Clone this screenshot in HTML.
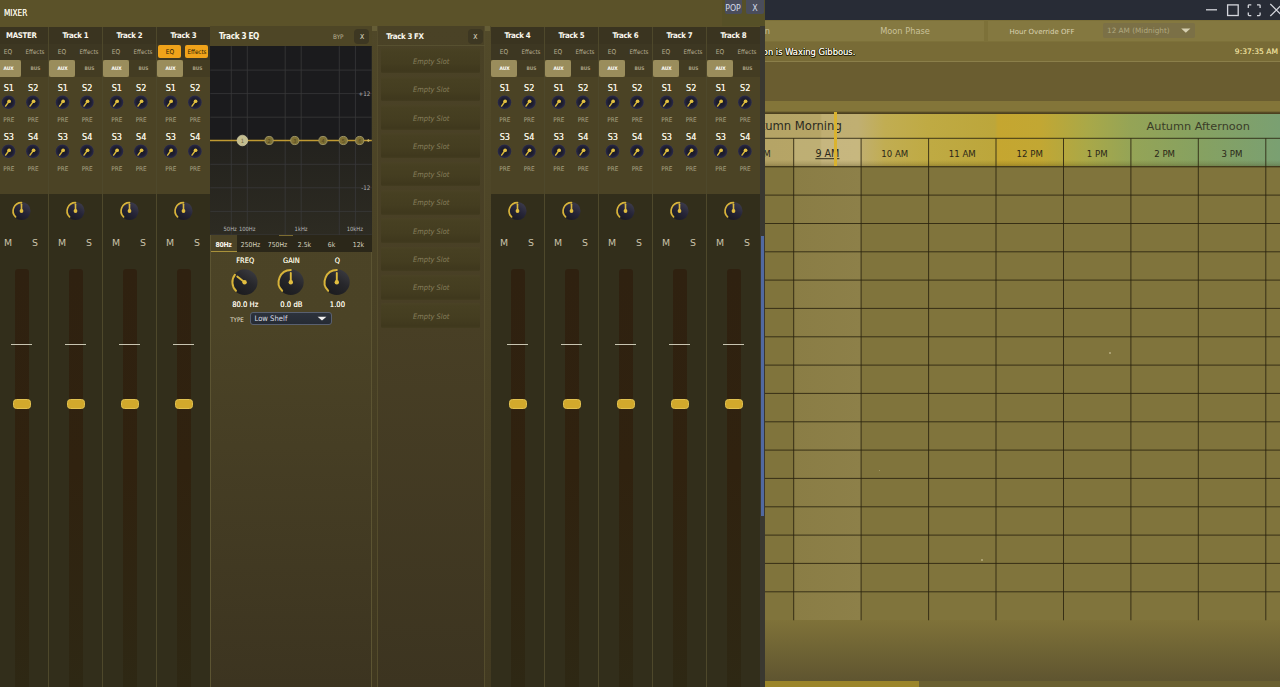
<!DOCTYPE html><html><head><meta charset="utf-8"><title>Mixer</title><style>
*{box-sizing:border-box;margin:0;padding:0}
html,body{width:1280px;height:687px;overflow:hidden;background:#7e723a}
body{position:relative;font-family:"DejaVu Sans Condensed","Liberation Sans",sans-serif;color:#fff}
.a{position:absolute}
.t{position:absolute;white-space:nowrap;text-align:center;transform:translate(-50%,-50%);line-height:1}
.tl{position:absolute;white-space:nowrap;transform:translate(0,-50%);line-height:1}
.tr{position:absolute;white-space:nowrap;transform:translate(-100%,-50%);line-height:1}
.main{font-family:"DejaVu Sans","Liberation Sans",sans-serif}
#mixer{position:absolute;left:0;top:0;width:765px;height:687px;background:#5b5229;overflow:hidden}
.col{position:absolute;top:26px;width:54px;height:661px;}
.col .sep{position:absolute;left:-1.2px;top:0.5px;width:1.6px;height:661px;background:#4e482b}
.col .nm{position:absolute;left:0.2px;top:0.5px;width:52.8px;height:17.5px;background:#3a3420}
.col .eqr{position:absolute;left:0.2px;top:18px;width:52.8px;height:16px;background:#3d3722}
.col .snd{position:absolute;left:0.2px;top:51px;width:52.8px;height:116.8px;background:#4b4325}
.col .low{position:absolute;left:0.2px;top:167.8px;width:52.8px;height:493.2px;background:#322e1b}
.aux{position:absolute;left:-0.4px;top:34px;width:26.6px;height:17px;background:#9a8d5c;border-radius:2px}
.bus{position:absolute;left:26.2px;top:34px;width:26.8px;height:17px;background:#433c22}
.lab{color:#f3efe0;font-size:9px;text-shadow:0 0 0.3px #f3efe0}
.pre{color:#a8a082;font-size:6.4px}
.ms{color:#c9c2aa;font-size:9.4px;font-family:"DejaVu Sans","Liberation Sans",sans-serif}
.ftrack{position:absolute;left:19.6px;top:243px;width:14px;height:418px;background:linear-gradient(180deg,#2f2110 0,#30220f 200px,#2e2814 418px);border-radius:3px 3px 0 0}
.fzero{position:absolute;left:16px;top:318px;width:21px;height:1px;background:#c8c4b0}
.fhandle{position:absolute;left:17.5px;top:372.8px;width:18px;height:10.6px;background:#d2a92c;border:1px solid #e0c050;border-radius:3.5px}
</style></head><body>
<div class="a main" id="mainwin" style="left:0;top:0;width:1280px;height:687px">
<div class="a" style="left:0;top:0;width:1280px;height:20px;background:#282c36"></div>
<svg class="a" style="left:1196px;top:0" width="84" height="20" viewBox="1196 0 84 20" fill="none" stroke="#d4d6dc" stroke-width="1.3"><path d="M1206 9.8H1217"/><rect x="1227.6" y="4.9" width="10.6" height="10.6"/><path d="M1248.3 8V5.6Q1248.3 4.8 1249.1 4.8H1251.3 M1257 4.8H1259.3Q1260.1 4.8 1260.1 5.6V8 M1260.1 12.4V14.8Q1260.1 15.6 1259.3 15.6H1257 M1251.3 15.6H1249.1Q1248.3 15.6 1248.3 14.8V12.4"/><path d="M1270.3 4L1282.3 16M1282.3 4L1270.3 16"/></svg>
<div class="a" style="left:0;top:20px;width:1280px;height:22px;background:#7d7139"></div>
<div class="a" style="left:760px;top:21px;width:224px;height:20px;background:#857941"></div>
<div class="a" style="left:988px;top:21px;width:292px;height:20px;background:#847840"></div>
<div class="tr" style="left:770px;top:31.3px;font-size:8.25px;color:#c9c19a">Season</div>
<div class="t" style="left:905px;top:31.3px;font-size:8.25px;color:#c9c19a">Moon Phase</div>
<div class="t" style="left:1042px;top:31.5px;font-size:7px;color:#dad3b2">Hour Override OFF</div>
<div class="a" style="left:1103px;top:23px;width:91.5px;height:15px;background:#7b7046;border-radius:2px"></div>
<div class="tl" style="left:1107px;top:31.2px;font-size:7.3px;color:#b0a880">12 AM (Midnight)</div>
<svg class="a" style="left:1180px;top:27px" width="12" height="7"><path d="M1.2 1.4H10.4L5.8 5.8Z" fill="#d6cfb0"/></svg>
<div class="a" style="left:0;top:42px;width:1280px;height:20px;background:#786b36"></div>
<div class="a" style="left:0;top:61px;width:1280px;height:1px;background:#8b7f4a"></div>
<div class="tr" style="left:855.4px;top:51.8px;font-family:DejaVu Sans Condensed,Liberation Sans,sans-serif;font-size:9.3px;color:#f4f1e6;text-shadow:0 0 0.4px #f4f1e6,0.8px 0 0.3px #2a2408,-0.8px 0 0.3px #2a2408,0 0.8px 0.3px #2a2408,0 -0.8px 0.3px #2a2408,0.6px 0.6px 0.3px #2a2408,-0.6px 0.6px 0.3px #2a2408,0.6px -0.6px 0.3px #2a2408,-0.6px -0.6px 0.3px #2a2408">The moon is Waxing Gibbous.</div>
<div class="tr" style="left:1278px;top:51.6px;font-size:7.55px;color:#e3d793;text-shadow:0 0 0.6px #e3d793">9:37:35 AM</div>
<div class="a" style="left:0;top:62px;width:1280px;height:40px;background:#6a5d30"></div>
<div class="a" style="left:0;top:101px;width:1280px;height:11.5px;background:#837539"></div>
<div class="a" style="left:0;top:111.4px;width:1280px;height:3.2px;background:linear-gradient(180deg,rgba(70,58,28,0),rgba(70,58,28,0.85) 45%,#4a3e1e 80%,rgba(74,62,30,0.5))"></div>
<div class="a" style="left:0;top:114px;width:1280px;height:52px;background:linear-gradient(90deg,#b5a466 766px,#b6a566 820px,#bfae72 822px,#c0af72 858px,#c1ad52 885px,#bfaa43 930px,#bca63b 995px,#c5a630 998px,#c2a733 1040px,#a8a849 1090px,#95a456 1130px,#86a161 1200px,#7aa072 1280px)"></div>
<div class="a" style="left:0;top:114px;width:1280px;height:24px;background:rgba(255,255,255,0.0)"></div>
<div class="a" style="left:794px;top:138px;width:67px;height:28px;background:rgba(255,250,225,0.12)"></div>

<div class="a" style="left:0;top:166px;width:1280px;height:454px;background:#80743c"></div>
<div class="a" style="left:794px;top:166px;width:67px;height:454px;background:linear-gradient(90deg,#8a7d45,#8d8049)"></div>
<div class="a" style="left:0;top:160px;width:1280px;height:7px;background:linear-gradient(180deg,rgba(60,50,10,0),rgba(60,50,10,0.12) 50%,rgba(60,50,10,0.32))"></div>
<div class="a" style="left:0;top:620px;width:1280px;height:67px;background:linear-gradient(180deg,#7f7239,#5f5530 90%)"></div>
<div class="a" style="left:0;top:681px;width:1280px;height:6px;background:#6a6031"></div>
<div class="a" style="left:760px;top:681px;width:158.5px;height:6px;background:#9b8529"></div>
<svg class="a" style="left:760px;top:112px" width="520" height="510" viewBox="760 112 520 510" stroke="#2a230f" stroke-width="0.95" stroke-opacity="0.9" fill="none"><path d="M726.3 138.3V620.3"/><path d="M793.7 138.3V620.3"/><path d="M861.1 138.3V620.3"/><path d="M928.6 138.3V620.3"/><path d="M996.0 138.3V620.3"/><path d="M1063.5 138.3V620.3"/><path d="M1130.9 138.3V620.3"/><path d="M1198.3 138.3V620.3"/><path d="M1265.8 138.3V620.3"/><path d="M760 138.3H1280"/><path d="M760 166.8H1280"/><path d="M760 195.1H1280"/><path d="M760 223.5H1280"/><path d="M760 251.8H1280"/><path d="M760 280.1H1280"/><path d="M760 308.4H1280"/><path d="M760 336.8H1280"/><path d="M760 365.1H1280"/><path d="M760 393.4H1280"/><path d="M760 421.8H1280"/><path d="M760 450.1H1280"/><path d="M760 478.4H1280"/><path d="M760 506.8H1280"/><path d="M760 535.1H1280"/><path d="M760 563.4H1280"/><path d="M760 591.8H1280"/></svg>
<div class="tr" style="left:841.8px;top:126.9px;font-size:11.6px;color:#2b2a1e">Autumn Morning</div>
<div class="tl" style="left:1146.5px;top:126.6px;font-size:11.3px;color:#3a3c28">Autumn Afternoon</div>
<div class="t" style="left:760.0px;top:153.8px;font-size:8.6px;color:#2b2718">8 AM</div>
<div class="t" style="left:827.4px;top:153.8px;font-size:8.6px;color:#2b2718;text-decoration:underline;font-size:9.6px">9 AM</div>
<div class="t" style="left:894.8px;top:153.8px;font-size:8.6px;color:#2b2718">10 AM</div>
<div class="t" style="left:962.3px;top:153.8px;font-size:8.6px;color:#2b2718">11 AM</div>
<div class="t" style="left:1029.7px;top:153.8px;font-size:8.6px;color:#2b2718">12 PM</div>
<div class="t" style="left:1097.2px;top:153.8px;font-size:8.6px;color:#2b2718">1 PM</div>
<div class="t" style="left:1164.6px;top:153.8px;font-size:8.6px;color:#2b2718">2 PM</div>
<div class="t" style="left:1232.0px;top:153.8px;font-size:8.6px;color:#2b2718">3 PM</div>
<div class="a" style="left:834.1px;top:112px;width:2.8px;height:54px;background:#dab32e"></div>
<div class="a" style="left:1109px;top:352px;width:1.5px;height:1.5px;background:#b8ae80;border-radius:1px"></div>
<div class="a" style="left:981px;top:559px;width:1.5px;height:1.5px;background:#b8ae80;border-radius:1px"></div>
<div class="a" style="left:879px;top:470px;width:1.2px;height:1.2px;background:#a89e70;border-radius:1px"></div>
</div>
<div id="mixer">
<svg width="0" height="0" style="position:absolute"><defs><radialGradient id="kg" cx="0.5" cy="0.5" r="0.5"><stop offset="0" stop-color="#191922"/><stop offset="0.6" stop-color="#1d1d2c"/><stop offset="1" stop-color="#29284a"/></radialGradient><linearGradient id="kb" x1="0.8" y1="0.1" x2="0.3" y2="0.9"><stop offset="0" stop-color="#3b3a4a"/><stop offset="0.5" stop-color="#262538"/><stop offset="1" stop-color="#1b1b25"/></linearGradient><linearGradient id="kc" x1="0.8" y1="0.1" x2="0.3" y2="0.9"><stop offset="0" stop-color="#38383d"/><stop offset="0.45" stop-color="#27272b"/><stop offset="1" stop-color="#1d1d20"/></linearGradient></defs></svg>
<div class="a" style="left:722px;top:0;width:43px;height:26px;background:#565027"></div>
<div class="tl" style="left:4px;top:13px;font-size:8.2px;color:#f6f2e2;text-shadow:0 0 0.6px #f6f2e2">MIXER</div>
<div class="a" style="left:724.5px;top:0;width:17px;height:13.5px;background:#4a4d5b;border-radius:0 0 2px 2px"></div>
<div class="a" style="left:746px;top:0;width:18px;height:13.5px;background:#4a4d5b;border-radius:0 0 2px 2px"></div>
<div class="t" style="left:733px;top:8px;font-size:8.7px;color:#d5dbe8">POP</div>
<div class="t" style="left:755px;top:8px;font-size:8.8px;color:#d5dbe8">X</div>
<div class="col" style="left:-5px">
<div class="sep"></div><div class="nm"></div><div class="eqr"></div><div class="snd"></div><div class="low"></div>
<div class="t" style="left:26.3px;top:9.7px;font-size:7.8px;color:#fbf8ee;font-weight:bold;letter-spacing:-0.35px">MASTER</div>
<div class="t" style="left:13px;top:25.8px;font-size:6.6px;color:#b5ad90">EQ</div>
<div class="t" style="left:40px;top:25.8px;font-size:6.2px;color:#b5ad90">Effects</div>
<div class="aux"></div><div class="bus"></div>
<div class="t" style="left:13.5px;top:42px;font-size:4.9px;color:#fff;font-weight:bold">AUX</div>
<div class="t" style="left:40.5px;top:42px;font-size:4.9px;color:#aaa284;font-weight:bold">BUS</div>
<div class="t lab" style="left:13.8px;top:62.0px">S1</div>
<svg class="a" style="left:4px;top:67px" width="19" height="19"><g transform="translate(9.50 9.20)"><circle r="7.5" fill="#4c472e" opacity="0.75"/><circle r="6.8" fill="url(#kg)"/><path d="M0.6 -0.9L-2.9 3.9" stroke="#d9b83c" stroke-width="1.45" stroke-linecap="round"/><circle cx="0.65" cy="-0.95" r="1.85" fill="#e2c042"/></g></svg>
<div class="t pre" style="left:13.8px;top:93.8px">PRE</div>
<div class="t lab" style="left:38.2px;top:62.0px">S2</div>
<svg class="a" style="left:28px;top:67px" width="19" height="19"><g transform="translate(9.90 9.20)"><circle r="7.5" fill="#4c472e" opacity="0.75"/><circle r="6.8" fill="url(#kg)"/><path d="M0.6 -0.9L-2.9 3.9" stroke="#d9b83c" stroke-width="1.45" stroke-linecap="round"/><circle cx="0.65" cy="-0.95" r="1.85" fill="#e2c042"/></g></svg>
<div class="t pre" style="left:38.2px;top:93.8px">PRE</div>
<div class="t lab" style="left:13.8px;top:111.0px">S3</div>
<svg class="a" style="left:4px;top:116px" width="19" height="19"><g transform="translate(9.50 9.20)"><circle r="7.5" fill="#4c472e" opacity="0.75"/><circle r="6.8" fill="url(#kg)"/><path d="M0.6 -0.9L-2.9 3.9" stroke="#d9b83c" stroke-width="1.45" stroke-linecap="round"/><circle cx="0.65" cy="-0.95" r="1.85" fill="#e2c042"/></g></svg>
<div class="t pre" style="left:13.8px;top:142.8px">PRE</div>
<div class="t lab" style="left:38.2px;top:111.0px">S4</div>
<svg class="a" style="left:28px;top:116px" width="19" height="19"><g transform="translate(9.90 9.20)"><circle r="7.5" fill="#4c472e" opacity="0.75"/><circle r="6.8" fill="url(#kg)"/><path d="M0.6 -0.9L-2.9 3.9" stroke="#d9b83c" stroke-width="1.45" stroke-linecap="round"/><circle cx="0.65" cy="-0.95" r="1.85" fill="#e2c042"/></g></svg>
<div class="t pre" style="left:38.2px;top:142.8px">PRE</div>
<svg class="a" style="left:15px;top:173px" width="23" height="23"><g transform="translate(11.50 12.00)"><circle r="9.1" fill="url(#kb)"/><path d="M-5.94 5.94A8.40 8.40 0 0 1 0.00 -8.40" stroke="#d8b43a" stroke-width="1.7" fill="none" stroke-linecap="round"/><path d="M0 0L0.00 -6.80" stroke="#dcb93c" stroke-width="1.6" stroke-linecap="round"/><circle r="1.9" fill="#e2be40"/></g></svg>
<div class="t ms" style="left:13px;top:216.5px">M</div>
<div class="t ms" style="left:40px;top:216.5px">S</div>
<div class="ftrack"></div><div class="fzero"></div><div class="fhandle"></div>
</div>
<div class="col" style="left:49px">
<div class="sep"></div><div class="nm"></div><div class="eqr"></div><div class="snd"></div><div class="low"></div>
<div class="t" style="left:26.3px;top:9.7px;font-size:7.8px;color:#fbf8ee;font-weight:bold;letter-spacing:-0.35px">Track 1</div>
<div class="t" style="left:13px;top:25.8px;font-size:6.6px;color:#b5ad90">EQ</div>
<div class="t" style="left:40px;top:25.8px;font-size:6.2px;color:#b5ad90">Effects</div>
<div class="aux"></div><div class="bus"></div>
<div class="t" style="left:13.5px;top:42px;font-size:4.9px;color:#fff;font-weight:bold">AUX</div>
<div class="t" style="left:40.5px;top:42px;font-size:4.9px;color:#aaa284;font-weight:bold">BUS</div>
<div class="t lab" style="left:13.8px;top:62.0px">S1</div>
<svg class="a" style="left:4px;top:67px" width="19" height="19"><g transform="translate(9.50 9.20)"><circle r="7.5" fill="#4c472e" opacity="0.75"/><circle r="6.8" fill="url(#kg)"/><path d="M0.6 -0.9L-2.9 3.9" stroke="#d9b83c" stroke-width="1.45" stroke-linecap="round"/><circle cx="0.65" cy="-0.95" r="1.85" fill="#e2c042"/></g></svg>
<div class="t pre" style="left:13.8px;top:93.8px">PRE</div>
<div class="t lab" style="left:38.2px;top:62.0px">S2</div>
<svg class="a" style="left:28px;top:67px" width="19" height="19"><g transform="translate(9.90 9.20)"><circle r="7.5" fill="#4c472e" opacity="0.75"/><circle r="6.8" fill="url(#kg)"/><path d="M0.6 -0.9L-2.9 3.9" stroke="#d9b83c" stroke-width="1.45" stroke-linecap="round"/><circle cx="0.65" cy="-0.95" r="1.85" fill="#e2c042"/></g></svg>
<div class="t pre" style="left:38.2px;top:93.8px">PRE</div>
<div class="t lab" style="left:13.8px;top:111.0px">S3</div>
<svg class="a" style="left:4px;top:116px" width="19" height="19"><g transform="translate(9.50 9.20)"><circle r="7.5" fill="#4c472e" opacity="0.75"/><circle r="6.8" fill="url(#kg)"/><path d="M0.6 -0.9L-2.9 3.9" stroke="#d9b83c" stroke-width="1.45" stroke-linecap="round"/><circle cx="0.65" cy="-0.95" r="1.85" fill="#e2c042"/></g></svg>
<div class="t pre" style="left:13.8px;top:142.8px">PRE</div>
<div class="t lab" style="left:38.2px;top:111.0px">S4</div>
<svg class="a" style="left:28px;top:116px" width="19" height="19"><g transform="translate(9.90 9.20)"><circle r="7.5" fill="#4c472e" opacity="0.75"/><circle r="6.8" fill="url(#kg)"/><path d="M0.6 -0.9L-2.9 3.9" stroke="#d9b83c" stroke-width="1.45" stroke-linecap="round"/><circle cx="0.65" cy="-0.95" r="1.85" fill="#e2c042"/></g></svg>
<div class="t pre" style="left:38.2px;top:142.8px">PRE</div>
<svg class="a" style="left:15px;top:173px" width="23" height="23"><g transform="translate(11.50 12.00)"><circle r="9.1" fill="url(#kb)"/><path d="M-5.94 5.94A8.40 8.40 0 0 1 0.00 -8.40" stroke="#d8b43a" stroke-width="1.7" fill="none" stroke-linecap="round"/><path d="M0 0L0.00 -6.80" stroke="#dcb93c" stroke-width="1.6" stroke-linecap="round"/><circle r="1.9" fill="#e2be40"/></g></svg>
<div class="t ms" style="left:13px;top:216.5px">M</div>
<div class="t ms" style="left:40px;top:216.5px">S</div>
<div class="ftrack"></div><div class="fzero"></div><div class="fhandle"></div>
</div>
<div class="col" style="left:103px">
<div class="sep"></div><div class="nm"></div><div class="eqr"></div><div class="snd"></div><div class="low"></div>
<div class="t" style="left:26.3px;top:9.7px;font-size:7.8px;color:#fbf8ee;font-weight:bold;letter-spacing:-0.35px">Track 2</div>
<div class="t" style="left:13px;top:25.8px;font-size:6.6px;color:#b5ad90">EQ</div>
<div class="t" style="left:40px;top:25.8px;font-size:6.2px;color:#b5ad90">Effects</div>
<div class="aux"></div><div class="bus"></div>
<div class="t" style="left:13.5px;top:42px;font-size:4.9px;color:#fff;font-weight:bold">AUX</div>
<div class="t" style="left:40.5px;top:42px;font-size:4.9px;color:#aaa284;font-weight:bold">BUS</div>
<div class="t lab" style="left:13.8px;top:62.0px">S1</div>
<svg class="a" style="left:4px;top:67px" width="19" height="19"><g transform="translate(9.50 9.20)"><circle r="7.5" fill="#4c472e" opacity="0.75"/><circle r="6.8" fill="url(#kg)"/><path d="M0.6 -0.9L-2.9 3.9" stroke="#d9b83c" stroke-width="1.45" stroke-linecap="round"/><circle cx="0.65" cy="-0.95" r="1.85" fill="#e2c042"/></g></svg>
<div class="t pre" style="left:13.8px;top:93.8px">PRE</div>
<div class="t lab" style="left:38.2px;top:62.0px">S2</div>
<svg class="a" style="left:28px;top:67px" width="19" height="19"><g transform="translate(9.90 9.20)"><circle r="7.5" fill="#4c472e" opacity="0.75"/><circle r="6.8" fill="url(#kg)"/><path d="M0.6 -0.9L-2.9 3.9" stroke="#d9b83c" stroke-width="1.45" stroke-linecap="round"/><circle cx="0.65" cy="-0.95" r="1.85" fill="#e2c042"/></g></svg>
<div class="t pre" style="left:38.2px;top:93.8px">PRE</div>
<div class="t lab" style="left:13.8px;top:111.0px">S3</div>
<svg class="a" style="left:4px;top:116px" width="19" height="19"><g transform="translate(9.50 9.20)"><circle r="7.5" fill="#4c472e" opacity="0.75"/><circle r="6.8" fill="url(#kg)"/><path d="M0.6 -0.9L-2.9 3.9" stroke="#d9b83c" stroke-width="1.45" stroke-linecap="round"/><circle cx="0.65" cy="-0.95" r="1.85" fill="#e2c042"/></g></svg>
<div class="t pre" style="left:13.8px;top:142.8px">PRE</div>
<div class="t lab" style="left:38.2px;top:111.0px">S4</div>
<svg class="a" style="left:28px;top:116px" width="19" height="19"><g transform="translate(9.90 9.20)"><circle r="7.5" fill="#4c472e" opacity="0.75"/><circle r="6.8" fill="url(#kg)"/><path d="M0.6 -0.9L-2.9 3.9" stroke="#d9b83c" stroke-width="1.45" stroke-linecap="round"/><circle cx="0.65" cy="-0.95" r="1.85" fill="#e2c042"/></g></svg>
<div class="t pre" style="left:38.2px;top:142.8px">PRE</div>
<svg class="a" style="left:15px;top:173px" width="23" height="23"><g transform="translate(11.50 12.00)"><circle r="9.1" fill="url(#kb)"/><path d="M-5.94 5.94A8.40 8.40 0 0 1 0.00 -8.40" stroke="#d8b43a" stroke-width="1.7" fill="none" stroke-linecap="round"/><path d="M0 0L0.00 -6.80" stroke="#dcb93c" stroke-width="1.6" stroke-linecap="round"/><circle r="1.9" fill="#e2be40"/></g></svg>
<div class="t ms" style="left:13px;top:216.5px">M</div>
<div class="t ms" style="left:40px;top:216.5px">S</div>
<div class="ftrack"></div><div class="fzero"></div><div class="fhandle"></div>
</div>
<div class="col" style="left:157px">
<div class="sep"></div><div class="nm"></div><div class="eqr"></div><div class="snd"></div><div class="low"></div>
<div class="t" style="left:26.3px;top:9.7px;font-size:7.8px;color:#fbf8ee;font-weight:bold;letter-spacing:-0.35px">Track 3</div>
<div class="a" style="left:1.2px;top:19px;width:23px;height:13.3px;background:#f0a31a;border-radius:2px"></div>
<div class="a" style="left:28px;top:19px;width:23px;height:13.3px;background:#f0a31a;border-radius:2px"></div>
<div class="t" style="left:13px;top:25.8px;font-size:6.6px;color:#2a1c04">EQ</div>
<div class="t" style="left:40px;top:25.8px;font-size:6.2px;color:#2a1c04">Effects</div>
<div class="aux"></div><div class="bus"></div>
<div class="t" style="left:13.5px;top:42px;font-size:4.9px;color:#fff;font-weight:bold">AUX</div>
<div class="t" style="left:40.5px;top:42px;font-size:4.9px;color:#aaa284;font-weight:bold">BUS</div>
<div class="t lab" style="left:13.8px;top:62.0px">S1</div>
<svg class="a" style="left:4px;top:67px" width="19" height="19"><g transform="translate(9.50 9.20)"><circle r="7.5" fill="#4c472e" opacity="0.75"/><circle r="6.8" fill="url(#kg)"/><path d="M0.6 -0.9L-2.9 3.9" stroke="#d9b83c" stroke-width="1.45" stroke-linecap="round"/><circle cx="0.65" cy="-0.95" r="1.85" fill="#e2c042"/></g></svg>
<div class="t pre" style="left:13.8px;top:93.8px">PRE</div>
<div class="t lab" style="left:38.2px;top:62.0px">S2</div>
<svg class="a" style="left:28px;top:67px" width="19" height="19"><g transform="translate(9.90 9.20)"><circle r="7.5" fill="#4c472e" opacity="0.75"/><circle r="6.8" fill="url(#kg)"/><path d="M0.6 -0.9L-2.9 3.9" stroke="#d9b83c" stroke-width="1.45" stroke-linecap="round"/><circle cx="0.65" cy="-0.95" r="1.85" fill="#e2c042"/></g></svg>
<div class="t pre" style="left:38.2px;top:93.8px">PRE</div>
<div class="t lab" style="left:13.8px;top:111.0px">S3</div>
<svg class="a" style="left:4px;top:116px" width="19" height="19"><g transform="translate(9.50 9.20)"><circle r="7.5" fill="#4c472e" opacity="0.75"/><circle r="6.8" fill="url(#kg)"/><path d="M0.6 -0.9L-2.9 3.9" stroke="#d9b83c" stroke-width="1.45" stroke-linecap="round"/><circle cx="0.65" cy="-0.95" r="1.85" fill="#e2c042"/></g></svg>
<div class="t pre" style="left:13.8px;top:142.8px">PRE</div>
<div class="t lab" style="left:38.2px;top:111.0px">S4</div>
<svg class="a" style="left:28px;top:116px" width="19" height="19"><g transform="translate(9.90 9.20)"><circle r="7.5" fill="#4c472e" opacity="0.75"/><circle r="6.8" fill="url(#kg)"/><path d="M0.6 -0.9L-2.9 3.9" stroke="#d9b83c" stroke-width="1.45" stroke-linecap="round"/><circle cx="0.65" cy="-0.95" r="1.85" fill="#e2c042"/></g></svg>
<div class="t pre" style="left:38.2px;top:142.8px">PRE</div>
<svg class="a" style="left:15px;top:173px" width="23" height="23"><g transform="translate(11.50 12.00)"><circle r="9.1" fill="url(#kb)"/><path d="M-5.94 5.94A8.40 8.40 0 0 1 0.00 -8.40" stroke="#d8b43a" stroke-width="1.7" fill="none" stroke-linecap="round"/><path d="M0 0L0.00 -6.80" stroke="#dcb93c" stroke-width="1.6" stroke-linecap="round"/><circle r="1.9" fill="#e2be40"/></g></svg>
<div class="t ms" style="left:13px;top:216.5px">M</div>
<div class="t ms" style="left:40px;top:216.5px">S</div>
<div class="ftrack"></div><div class="fzero"></div><div class="fhandle"></div>
</div>
<div class="col" style="left:491px">
<div class="sep"></div><div class="nm"></div><div class="eqr"></div><div class="snd"></div><div class="low"></div>
<div class="t" style="left:26.3px;top:9.7px;font-size:7.8px;color:#fbf8ee;font-weight:bold;letter-spacing:-0.35px">Track 4</div>
<div class="t" style="left:13px;top:25.8px;font-size:6.6px;color:#b5ad90">EQ</div>
<div class="t" style="left:40px;top:25.8px;font-size:6.2px;color:#b5ad90">Effects</div>
<div class="aux"></div><div class="bus"></div>
<div class="t" style="left:13.5px;top:42px;font-size:4.9px;color:#fff;font-weight:bold">AUX</div>
<div class="t" style="left:40.5px;top:42px;font-size:4.9px;color:#aaa284;font-weight:bold">BUS</div>
<div class="t lab" style="left:13.8px;top:62.0px">S1</div>
<svg class="a" style="left:4px;top:67px" width="19" height="19"><g transform="translate(9.50 9.20)"><circle r="7.5" fill="#4c472e" opacity="0.75"/><circle r="6.8" fill="url(#kg)"/><path d="M0.6 -0.9L-2.9 3.9" stroke="#d9b83c" stroke-width="1.45" stroke-linecap="round"/><circle cx="0.65" cy="-0.95" r="1.85" fill="#e2c042"/></g></svg>
<div class="t pre" style="left:13.8px;top:93.8px">PRE</div>
<div class="t lab" style="left:38.2px;top:62.0px">S2</div>
<svg class="a" style="left:28px;top:67px" width="19" height="19"><g transform="translate(9.90 9.20)"><circle r="7.5" fill="#4c472e" opacity="0.75"/><circle r="6.8" fill="url(#kg)"/><path d="M0.6 -0.9L-2.9 3.9" stroke="#d9b83c" stroke-width="1.45" stroke-linecap="round"/><circle cx="0.65" cy="-0.95" r="1.85" fill="#e2c042"/></g></svg>
<div class="t pre" style="left:38.2px;top:93.8px">PRE</div>
<div class="t lab" style="left:13.8px;top:111.0px">S3</div>
<svg class="a" style="left:4px;top:116px" width="19" height="19"><g transform="translate(9.50 9.20)"><circle r="7.5" fill="#4c472e" opacity="0.75"/><circle r="6.8" fill="url(#kg)"/><path d="M0.6 -0.9L-2.9 3.9" stroke="#d9b83c" stroke-width="1.45" stroke-linecap="round"/><circle cx="0.65" cy="-0.95" r="1.85" fill="#e2c042"/></g></svg>
<div class="t pre" style="left:13.8px;top:142.8px">PRE</div>
<div class="t lab" style="left:38.2px;top:111.0px">S4</div>
<svg class="a" style="left:28px;top:116px" width="19" height="19"><g transform="translate(9.90 9.20)"><circle r="7.5" fill="#4c472e" opacity="0.75"/><circle r="6.8" fill="url(#kg)"/><path d="M0.6 -0.9L-2.9 3.9" stroke="#d9b83c" stroke-width="1.45" stroke-linecap="round"/><circle cx="0.65" cy="-0.95" r="1.85" fill="#e2c042"/></g></svg>
<div class="t pre" style="left:38.2px;top:142.8px">PRE</div>
<svg class="a" style="left:15px;top:173px" width="23" height="23"><g transform="translate(11.50 12.00)"><circle r="9.1" fill="url(#kb)"/><path d="M-5.94 5.94A8.40 8.40 0 0 1 0.00 -8.40" stroke="#d8b43a" stroke-width="1.7" fill="none" stroke-linecap="round"/><path d="M0 0L0.00 -6.80" stroke="#dcb93c" stroke-width="1.6" stroke-linecap="round"/><circle r="1.9" fill="#e2be40"/></g></svg>
<div class="t ms" style="left:13px;top:216.5px">M</div>
<div class="t ms" style="left:40px;top:216.5px">S</div>
<div class="ftrack"></div><div class="fzero"></div><div class="fhandle"></div>
</div>
<div class="col" style="left:545px">
<div class="sep"></div><div class="nm"></div><div class="eqr"></div><div class="snd"></div><div class="low"></div>
<div class="t" style="left:26.3px;top:9.7px;font-size:7.8px;color:#fbf8ee;font-weight:bold;letter-spacing:-0.35px">Track 5</div>
<div class="t" style="left:13px;top:25.8px;font-size:6.6px;color:#b5ad90">EQ</div>
<div class="t" style="left:40px;top:25.8px;font-size:6.2px;color:#b5ad90">Effects</div>
<div class="aux"></div><div class="bus"></div>
<div class="t" style="left:13.5px;top:42px;font-size:4.9px;color:#fff;font-weight:bold">AUX</div>
<div class="t" style="left:40.5px;top:42px;font-size:4.9px;color:#aaa284;font-weight:bold">BUS</div>
<div class="t lab" style="left:13.8px;top:62.0px">S1</div>
<svg class="a" style="left:4px;top:67px" width="19" height="19"><g transform="translate(9.50 9.20)"><circle r="7.5" fill="#4c472e" opacity="0.75"/><circle r="6.8" fill="url(#kg)"/><path d="M0.6 -0.9L-2.9 3.9" stroke="#d9b83c" stroke-width="1.45" stroke-linecap="round"/><circle cx="0.65" cy="-0.95" r="1.85" fill="#e2c042"/></g></svg>
<div class="t pre" style="left:13.8px;top:93.8px">PRE</div>
<div class="t lab" style="left:38.2px;top:62.0px">S2</div>
<svg class="a" style="left:28px;top:67px" width="19" height="19"><g transform="translate(9.90 9.20)"><circle r="7.5" fill="#4c472e" opacity="0.75"/><circle r="6.8" fill="url(#kg)"/><path d="M0.6 -0.9L-2.9 3.9" stroke="#d9b83c" stroke-width="1.45" stroke-linecap="round"/><circle cx="0.65" cy="-0.95" r="1.85" fill="#e2c042"/></g></svg>
<div class="t pre" style="left:38.2px;top:93.8px">PRE</div>
<div class="t lab" style="left:13.8px;top:111.0px">S3</div>
<svg class="a" style="left:4px;top:116px" width="19" height="19"><g transform="translate(9.50 9.20)"><circle r="7.5" fill="#4c472e" opacity="0.75"/><circle r="6.8" fill="url(#kg)"/><path d="M0.6 -0.9L-2.9 3.9" stroke="#d9b83c" stroke-width="1.45" stroke-linecap="round"/><circle cx="0.65" cy="-0.95" r="1.85" fill="#e2c042"/></g></svg>
<div class="t pre" style="left:13.8px;top:142.8px">PRE</div>
<div class="t lab" style="left:38.2px;top:111.0px">S4</div>
<svg class="a" style="left:28px;top:116px" width="19" height="19"><g transform="translate(9.90 9.20)"><circle r="7.5" fill="#4c472e" opacity="0.75"/><circle r="6.8" fill="url(#kg)"/><path d="M0.6 -0.9L-2.9 3.9" stroke="#d9b83c" stroke-width="1.45" stroke-linecap="round"/><circle cx="0.65" cy="-0.95" r="1.85" fill="#e2c042"/></g></svg>
<div class="t pre" style="left:38.2px;top:142.8px">PRE</div>
<svg class="a" style="left:15px;top:173px" width="23" height="23"><g transform="translate(11.50 12.00)"><circle r="9.1" fill="url(#kb)"/><path d="M-5.94 5.94A8.40 8.40 0 0 1 0.00 -8.40" stroke="#d8b43a" stroke-width="1.7" fill="none" stroke-linecap="round"/><path d="M0 0L0.00 -6.80" stroke="#dcb93c" stroke-width="1.6" stroke-linecap="round"/><circle r="1.9" fill="#e2be40"/></g></svg>
<div class="t ms" style="left:13px;top:216.5px">M</div>
<div class="t ms" style="left:40px;top:216.5px">S</div>
<div class="ftrack"></div><div class="fzero"></div><div class="fhandle"></div>
</div>
<div class="col" style="left:599px">
<div class="sep"></div><div class="nm"></div><div class="eqr"></div><div class="snd"></div><div class="low"></div>
<div class="t" style="left:26.3px;top:9.7px;font-size:7.8px;color:#fbf8ee;font-weight:bold;letter-spacing:-0.35px">Track 6</div>
<div class="t" style="left:13px;top:25.8px;font-size:6.6px;color:#b5ad90">EQ</div>
<div class="t" style="left:40px;top:25.8px;font-size:6.2px;color:#b5ad90">Effects</div>
<div class="aux"></div><div class="bus"></div>
<div class="t" style="left:13.5px;top:42px;font-size:4.9px;color:#fff;font-weight:bold">AUX</div>
<div class="t" style="left:40.5px;top:42px;font-size:4.9px;color:#aaa284;font-weight:bold">BUS</div>
<div class="t lab" style="left:13.8px;top:62.0px">S1</div>
<svg class="a" style="left:4px;top:67px" width="19" height="19"><g transform="translate(9.50 9.20)"><circle r="7.5" fill="#4c472e" opacity="0.75"/><circle r="6.8" fill="url(#kg)"/><path d="M0.6 -0.9L-2.9 3.9" stroke="#d9b83c" stroke-width="1.45" stroke-linecap="round"/><circle cx="0.65" cy="-0.95" r="1.85" fill="#e2c042"/></g></svg>
<div class="t pre" style="left:13.8px;top:93.8px">PRE</div>
<div class="t lab" style="left:38.2px;top:62.0px">S2</div>
<svg class="a" style="left:28px;top:67px" width="19" height="19"><g transform="translate(9.90 9.20)"><circle r="7.5" fill="#4c472e" opacity="0.75"/><circle r="6.8" fill="url(#kg)"/><path d="M0.6 -0.9L-2.9 3.9" stroke="#d9b83c" stroke-width="1.45" stroke-linecap="round"/><circle cx="0.65" cy="-0.95" r="1.85" fill="#e2c042"/></g></svg>
<div class="t pre" style="left:38.2px;top:93.8px">PRE</div>
<div class="t lab" style="left:13.8px;top:111.0px">S3</div>
<svg class="a" style="left:4px;top:116px" width="19" height="19"><g transform="translate(9.50 9.20)"><circle r="7.5" fill="#4c472e" opacity="0.75"/><circle r="6.8" fill="url(#kg)"/><path d="M0.6 -0.9L-2.9 3.9" stroke="#d9b83c" stroke-width="1.45" stroke-linecap="round"/><circle cx="0.65" cy="-0.95" r="1.85" fill="#e2c042"/></g></svg>
<div class="t pre" style="left:13.8px;top:142.8px">PRE</div>
<div class="t lab" style="left:38.2px;top:111.0px">S4</div>
<svg class="a" style="left:28px;top:116px" width="19" height="19"><g transform="translate(9.90 9.20)"><circle r="7.5" fill="#4c472e" opacity="0.75"/><circle r="6.8" fill="url(#kg)"/><path d="M0.6 -0.9L-2.9 3.9" stroke="#d9b83c" stroke-width="1.45" stroke-linecap="round"/><circle cx="0.65" cy="-0.95" r="1.85" fill="#e2c042"/></g></svg>
<div class="t pre" style="left:38.2px;top:142.8px">PRE</div>
<svg class="a" style="left:15px;top:173px" width="23" height="23"><g transform="translate(11.50 12.00)"><circle r="9.1" fill="url(#kb)"/><path d="M-5.94 5.94A8.40 8.40 0 0 1 0.00 -8.40" stroke="#d8b43a" stroke-width="1.7" fill="none" stroke-linecap="round"/><path d="M0 0L0.00 -6.80" stroke="#dcb93c" stroke-width="1.6" stroke-linecap="round"/><circle r="1.9" fill="#e2be40"/></g></svg>
<div class="t ms" style="left:13px;top:216.5px">M</div>
<div class="t ms" style="left:40px;top:216.5px">S</div>
<div class="ftrack"></div><div class="fzero"></div><div class="fhandle"></div>
</div>
<div class="col" style="left:653px">
<div class="sep"></div><div class="nm"></div><div class="eqr"></div><div class="snd"></div><div class="low"></div>
<div class="t" style="left:26.3px;top:9.7px;font-size:7.8px;color:#fbf8ee;font-weight:bold;letter-spacing:-0.35px">Track 7</div>
<div class="t" style="left:13px;top:25.8px;font-size:6.6px;color:#b5ad90">EQ</div>
<div class="t" style="left:40px;top:25.8px;font-size:6.2px;color:#b5ad90">Effects</div>
<div class="aux"></div><div class="bus"></div>
<div class="t" style="left:13.5px;top:42px;font-size:4.9px;color:#fff;font-weight:bold">AUX</div>
<div class="t" style="left:40.5px;top:42px;font-size:4.9px;color:#aaa284;font-weight:bold">BUS</div>
<div class="t lab" style="left:13.8px;top:62.0px">S1</div>
<svg class="a" style="left:4px;top:67px" width="19" height="19"><g transform="translate(9.50 9.20)"><circle r="7.5" fill="#4c472e" opacity="0.75"/><circle r="6.8" fill="url(#kg)"/><path d="M0.6 -0.9L-2.9 3.9" stroke="#d9b83c" stroke-width="1.45" stroke-linecap="round"/><circle cx="0.65" cy="-0.95" r="1.85" fill="#e2c042"/></g></svg>
<div class="t pre" style="left:13.8px;top:93.8px">PRE</div>
<div class="t lab" style="left:38.2px;top:62.0px">S2</div>
<svg class="a" style="left:28px;top:67px" width="19" height="19"><g transform="translate(9.90 9.20)"><circle r="7.5" fill="#4c472e" opacity="0.75"/><circle r="6.8" fill="url(#kg)"/><path d="M0.6 -0.9L-2.9 3.9" stroke="#d9b83c" stroke-width="1.45" stroke-linecap="round"/><circle cx="0.65" cy="-0.95" r="1.85" fill="#e2c042"/></g></svg>
<div class="t pre" style="left:38.2px;top:93.8px">PRE</div>
<div class="t lab" style="left:13.8px;top:111.0px">S3</div>
<svg class="a" style="left:4px;top:116px" width="19" height="19"><g transform="translate(9.50 9.20)"><circle r="7.5" fill="#4c472e" opacity="0.75"/><circle r="6.8" fill="url(#kg)"/><path d="M0.6 -0.9L-2.9 3.9" stroke="#d9b83c" stroke-width="1.45" stroke-linecap="round"/><circle cx="0.65" cy="-0.95" r="1.85" fill="#e2c042"/></g></svg>
<div class="t pre" style="left:13.8px;top:142.8px">PRE</div>
<div class="t lab" style="left:38.2px;top:111.0px">S4</div>
<svg class="a" style="left:28px;top:116px" width="19" height="19"><g transform="translate(9.90 9.20)"><circle r="7.5" fill="#4c472e" opacity="0.75"/><circle r="6.8" fill="url(#kg)"/><path d="M0.6 -0.9L-2.9 3.9" stroke="#d9b83c" stroke-width="1.45" stroke-linecap="round"/><circle cx="0.65" cy="-0.95" r="1.85" fill="#e2c042"/></g></svg>
<div class="t pre" style="left:38.2px;top:142.8px">PRE</div>
<svg class="a" style="left:15px;top:173px" width="23" height="23"><g transform="translate(11.50 12.00)"><circle r="9.1" fill="url(#kb)"/><path d="M-5.94 5.94A8.40 8.40 0 0 1 0.00 -8.40" stroke="#d8b43a" stroke-width="1.7" fill="none" stroke-linecap="round"/><path d="M0 0L0.00 -6.80" stroke="#dcb93c" stroke-width="1.6" stroke-linecap="round"/><circle r="1.9" fill="#e2be40"/></g></svg>
<div class="t ms" style="left:13px;top:216.5px">M</div>
<div class="t ms" style="left:40px;top:216.5px">S</div>
<div class="ftrack"></div><div class="fzero"></div><div class="fhandle"></div>
</div>
<div class="col" style="left:707px">
<div class="sep"></div><div class="nm"></div><div class="eqr"></div><div class="snd"></div><div class="low"></div>
<div class="t" style="left:26.3px;top:9.7px;font-size:7.8px;color:#fbf8ee;font-weight:bold;letter-spacing:-0.35px">Track 8</div>
<div class="t" style="left:13px;top:25.8px;font-size:6.6px;color:#b5ad90">EQ</div>
<div class="t" style="left:40px;top:25.8px;font-size:6.2px;color:#b5ad90">Effects</div>
<div class="aux"></div><div class="bus"></div>
<div class="t" style="left:13.5px;top:42px;font-size:4.9px;color:#fff;font-weight:bold">AUX</div>
<div class="t" style="left:40.5px;top:42px;font-size:4.9px;color:#aaa284;font-weight:bold">BUS</div>
<div class="t lab" style="left:13.8px;top:62.0px">S1</div>
<svg class="a" style="left:4px;top:67px" width="19" height="19"><g transform="translate(9.50 9.20)"><circle r="7.5" fill="#4c472e" opacity="0.75"/><circle r="6.8" fill="url(#kg)"/><path d="M0.6 -0.9L-2.9 3.9" stroke="#d9b83c" stroke-width="1.45" stroke-linecap="round"/><circle cx="0.65" cy="-0.95" r="1.85" fill="#e2c042"/></g></svg>
<div class="t pre" style="left:13.8px;top:93.8px">PRE</div>
<div class="t lab" style="left:38.2px;top:62.0px">S2</div>
<svg class="a" style="left:28px;top:67px" width="19" height="19"><g transform="translate(9.90 9.20)"><circle r="7.5" fill="#4c472e" opacity="0.75"/><circle r="6.8" fill="url(#kg)"/><path d="M0.6 -0.9L-2.9 3.9" stroke="#d9b83c" stroke-width="1.45" stroke-linecap="round"/><circle cx="0.65" cy="-0.95" r="1.85" fill="#e2c042"/></g></svg>
<div class="t pre" style="left:38.2px;top:93.8px">PRE</div>
<div class="t lab" style="left:13.8px;top:111.0px">S3</div>
<svg class="a" style="left:4px;top:116px" width="19" height="19"><g transform="translate(9.50 9.20)"><circle r="7.5" fill="#4c472e" opacity="0.75"/><circle r="6.8" fill="url(#kg)"/><path d="M0.6 -0.9L-2.9 3.9" stroke="#d9b83c" stroke-width="1.45" stroke-linecap="round"/><circle cx="0.65" cy="-0.95" r="1.85" fill="#e2c042"/></g></svg>
<div class="t pre" style="left:13.8px;top:142.8px">PRE</div>
<div class="t lab" style="left:38.2px;top:111.0px">S4</div>
<svg class="a" style="left:28px;top:116px" width="19" height="19"><g transform="translate(9.90 9.20)"><circle r="7.5" fill="#4c472e" opacity="0.75"/><circle r="6.8" fill="url(#kg)"/><path d="M0.6 -0.9L-2.9 3.9" stroke="#d9b83c" stroke-width="1.45" stroke-linecap="round"/><circle cx="0.65" cy="-0.95" r="1.85" fill="#e2c042"/></g></svg>
<div class="t pre" style="left:38.2px;top:142.8px">PRE</div>
<svg class="a" style="left:15px;top:173px" width="23" height="23"><g transform="translate(11.50 12.00)"><circle r="9.1" fill="url(#kb)"/><path d="M-5.94 5.94A8.40 8.40 0 0 1 0.00 -8.40" stroke="#d8b43a" stroke-width="1.7" fill="none" stroke-linecap="round"/><path d="M0 0L0.00 -6.80" stroke="#dcb93c" stroke-width="1.6" stroke-linecap="round"/><circle r="1.9" fill="#e2be40"/></g></svg>
<div class="t ms" style="left:13px;top:216.5px">M</div>
<div class="t ms" style="left:40px;top:216.5px">S</div>
<div class="ftrack"></div><div class="fzero"></div><div class="fhandle"></div>
</div>
<div class="a" id="eq" style="left:209.7px;top:26px;width:162.5px;height:661px;background:linear-gradient(180deg,#4c4427 0,#4b4326 300px,#3c3420 661px);border-left:1px solid #5c5432;border-right:1px solid #5c5432"></div>
<div class="a" style="left:210px;top:26px;width:162.5px;height:20.5px;background:#4e4626"></div>
<div class="tl" style="left:219px;top:36.3px;font-size:8.2px;color:#fbf8ee;font-weight:bold;letter-spacing:-0.35px">Track 3 EQ</div>
<div class="t" style="left:338.3px;top:36.6px;font-size:6.3px;color:#bdb597">BYP</div>
<div class="a" style="left:354.2px;top:29.2px;width:14.8px;height:14.5px;background:#3d3722;border-radius:4px"></div>
<div class="t" style="left:362px;top:36.6px;font-size:6.8px;color:#e8e4d4">X</div>
<svg class="a" style="left:210.2px;top:46.4px" width="161.8" height="189.1" viewBox="210.2 46.4 161.8 189.1"><rect x="210.2" y="46.4" width="161.8" height="189.1" fill="#1b1b1d"/><defs><linearGradient id="eqf" x1="0" y1="0" x2="0" y2="1"><stop offset="0" stop-color="#23221e"/><stop offset="1" stop-color="#2d2b22"/></linearGradient></defs><rect x="210.2" y="141" width="161.8" height="94.5" fill="url(#eqf)"/><g stroke="#38383a" stroke-width="0.8"><path d="M231.5 46.5V235.5"/><path d="M247.5 46.5V235.5"/><path d="M285.4 46.5V235.5"/><path d="M301.4 46.5V235.5"/><path d="M339.5 46.5V235.5"/><path d="M355.6 46.5V235.5"/><path d="M210.5 70.5H372"/><path d="M210.5 94.0H372"/><path d="M210.5 117.6H372"/><path d="M210.5 164.7H372"/><path d="M210.5 188.2H372"/><path d="M210.5 211.8H372"/><path d="M210.5 235.3H372"/></g><path d="M210.2 140.9H372" stroke="#c09a32" stroke-width="1.6"/><path d="M368.5 139.3L370.1 140.9L368.5 142.5L366.9 140.9Z" fill="#cdb462"/><circle cx="242.6" cy="140.9" r="5.3" fill="#c4bd8f" stroke="#d6d0a8" stroke-width="0.7"/><text x="242.6" y="143.1" font-size="5.8" fill="#6d673f" text-anchor="middle" font-family="DejaVu Sans Condensed, Liberation Sans, sans-serif">1</text><circle cx="269.3" cy="140.9" r="4.1" fill="#7f7034" stroke="#a59c6a" stroke-width="0.9"/><text x="269.3" y="143" font-size="5.4" fill="#4a4220" text-anchor="middle" font-family="DejaVu Sans Condensed, Liberation Sans, sans-serif">2</text><circle cx="295" cy="140.9" r="4.1" fill="#7f7034" stroke="#a59c6a" stroke-width="0.9"/><text x="295" y="143" font-size="5.4" fill="#4a4220" text-anchor="middle" font-family="DejaVu Sans Condensed, Liberation Sans, sans-serif">3</text><circle cx="323.2" cy="140.9" r="4.1" fill="#7f7034" stroke="#a59c6a" stroke-width="0.9"/><text x="323.2" y="143" font-size="5.4" fill="#4a4220" text-anchor="middle" font-family="DejaVu Sans Condensed, Liberation Sans, sans-serif">4</text><circle cx="343.5" cy="140.9" r="4.1" fill="#7f7034" stroke="#a59c6a" stroke-width="0.9"/><text x="343.5" y="143" font-size="5.4" fill="#4a4220" text-anchor="middle" font-family="DejaVu Sans Condensed, Liberation Sans, sans-serif">5</text><circle cx="359.9" cy="140.9" r="4.1" fill="#7f7034" stroke="#a59c6a" stroke-width="0.9"/><text x="359.9" y="143" font-size="5.4" fill="#4a4220" text-anchor="middle" font-family="DejaVu Sans Condensed, Liberation Sans, sans-serif">6</text><text x="370.5" y="96.2" font-size="6.2" fill="#b4b4b4" text-anchor="end" font-family="DejaVu Sans Condensed, Liberation Sans, sans-serif">+12</text><text x="370.5" y="190.4" font-size="6.2" fill="#b4b4b4" text-anchor="end" font-family="DejaVu Sans Condensed, Liberation Sans, sans-serif">-12</text><text x="230.4" y="231.9" font-size="5.8" fill="#b8b8b8" text-anchor="middle" font-family="DejaVu Sans Condensed, Liberation Sans, sans-serif">50Hz</text><text x="247.4" y="231.9" font-size="5.8" fill="#b8b8b8" text-anchor="middle" font-family="DejaVu Sans Condensed, Liberation Sans, sans-serif">100Hz</text><text x="301.3" y="231.9" font-size="5.8" fill="#b8b8b8" text-anchor="middle" font-family="DejaVu Sans Condensed, Liberation Sans, sans-serif">1kHz</text><text x="355.1" y="231.9" font-size="5.8" fill="#b8b8b8" text-anchor="middle" font-family="DejaVu Sans Condensed, Liberation Sans, sans-serif">10kHz</text></svg>
<div class="a" style="left:210.5px;top:235.3px;width:161.5px;height:17.2px;background:#2b2719"></div>
<div class="a" style="left:210.5px;top:235.3px;width:26.5px;height:17.2px;background:#4b4326;border-bottom:1.8px solid #a8913a"></div>
<div class="a" style="left:278.6px;top:235px;width:14px;height:1px;background:#7d6c30"></div>
<div class="t" style="left:223.5px;top:244.6px;font-size:6.8px;color:#fbf8ee;font-weight:bold;letter-spacing:-0.3px">80Hz</div>
<div class="t" style="left:250.5px;top:244.6px;font-size:6.8px;color:#d9d4c0">250Hz</div>
<div class="t" style="left:277.5px;top:244.6px;font-size:6.8px;color:#d9d4c0">750Hz</div>
<div class="t" style="left:304.5px;top:244.6px;font-size:6.8px;color:#d9d4c0">2.5k</div>
<div class="t" style="left:331.5px;top:244.6px;font-size:6.8px;color:#d9d4c0">6k</div>
<div class="t" style="left:358.5px;top:244.6px;font-size:6.8px;color:#d9d4c0">12k</div>
<div class="t" style="left:245.2px;top:261.3px;font-size:7.4px;color:#f1eddc;text-shadow:0 0 0.4px #f1eddc">FREQ</div>
<svg class="a" style="left:229px;top:267px" width="31" height="31"><g transform="translate(15.60 15.20)"><circle r="12.9" fill="url(#kc)"/><path d="M-8.63 8.63A12.20 12.20 0 0 1 -9.61 -7.51" stroke="#d8b43a" stroke-width="2.0" fill="none" stroke-linecap="round"/><path d="M0 0L-7.33 -5.73" stroke="#dcb93c" stroke-width="1.9" stroke-linecap="round"/><circle r="2.2" fill="#e2be40"/></g></svg>
<div class="t" style="left:245.2px;top:304.8px;font-size:7.6px;color:#f6f2e4;text-shadow:0 0 0.4px #f6f2e4">80.0 Hz</div>
<div class="t" style="left:291.40000000000003px;top:261.3px;font-size:7.4px;color:#f1eddc;text-shadow:0 0 0.4px #f1eddc">GAIN</div>
<svg class="a" style="left:275px;top:267px" width="31" height="31"><g transform="translate(15.80 15.20)"><circle r="12.9" fill="url(#kc)"/><path d="M-8.63 8.63A12.20 12.20 0 0 1 0.00 -12.20" stroke="#d8b43a" stroke-width="2.0" fill="none" stroke-linecap="round"/><path d="M0 0L0.00 -9.30" stroke="#dcb93c" stroke-width="1.9" stroke-linecap="round"/><circle r="2.2" fill="#e2be40"/></g></svg>
<div class="t" style="left:291.40000000000003px;top:304.8px;font-size:7.6px;color:#f6f2e4;text-shadow:0 0 0.4px #f6f2e4">0.0 dB</div>
<div class="t" style="left:337.40000000000003px;top:261.3px;font-size:7.4px;color:#f1eddc;text-shadow:0 0 0.4px #f1eddc">Q</div>
<svg class="a" style="left:321px;top:267px" width="31" height="31"><g transform="translate(15.80 15.20)"><circle r="12.9" fill="url(#kc)"/><path d="M-8.63 8.63A12.20 12.20 0 0 1 0.00 -12.20" stroke="#d8b43a" stroke-width="2.0" fill="none" stroke-linecap="round"/><path d="M0 0L0.00 -9.30" stroke="#dcb93c" stroke-width="1.9" stroke-linecap="round"/><circle r="2.2" fill="#e2be40"/></g></svg>
<div class="t" style="left:337.40000000000003px;top:304.8px;font-size:7.6px;color:#f6f2e4;text-shadow:0 0 0.4px #f6f2e4">1.00</div>
<div class="t" style="left:237px;top:320.3px;font-size:6.2px;color:#e6e2d0">TYPE</div>
<div class="a" style="left:250.3px;top:312.3px;width:81.5px;height:12.6px;background:linear-gradient(180deg,#2c323c,#262b34);border:1px solid #596070;border-radius:3px"></div>
<div class="tl" style="left:254.5px;top:318.6px;font-size:7.6px;color:#d9dde3">Low Shelf</div>
<svg class="a" style="left:316px;top:316px" width="12" height="6"><path d="M1.6 0.8H10.4L6 4.6Z" fill="#f0f0f0"/></svg>
<div class="a" style="left:372px;top:26px;width:5.4px;height:661px;background:linear-gradient(180deg,#4f4728,#403820)"></div><div class="a" style="left:372.2px;top:26.4px;width:4.8px;height:4.6px;background:#655d36"></div>
<div class="a" id="fx" style="left:377.3px;top:26px;width:107.7px;height:661px;background:linear-gradient(180deg,#4a4226 0,#483f25 300px,#3c3420 661px);border-left:1px solid #544c2c;border-right:1px solid #544c2c"></div>
<div class="tl" style="left:386.2px;top:37.2px;font-size:7.9px;color:#fbf8ee;font-weight:bold;letter-spacing:-0.4px">Track 3 FX</div>
<div class="a" style="left:468px;top:29px;width:14.5px;height:14.5px;background:#3d3722;border-radius:4px"></div>
<div class="t" style="left:475.3px;top:36.6px;font-size:6.8px;color:#e8e4d4">X</div>
<div class="a" style="left:377.3px;top:45.4px;width:107.7px;height:1px;background:#575030"></div>
<div class="a" style="left:380.6px;top:48.4px;width:99.6px;height:24.6px;background:linear-gradient(180deg,#4a4225 0,#474022 12%,#443d20 60%,#3f381d 92%,#433c20 100%);border-radius:1.5px"></div>
<div class="t" style="left:431.2px;top:61.8px;font-size:7.4px;color:#857d5b;font-style:italic">Empty Slot</div>
<div class="a" style="left:380.6px;top:76.7px;width:99.6px;height:24.6px;background:linear-gradient(180deg,#4a4225 0,#474022 12%,#443d20 60%,#3f381d 92%,#433c20 100%);border-radius:1.5px"></div>
<div class="t" style="left:431.2px;top:90.1px;font-size:7.4px;color:#857d5b;font-style:italic">Empty Slot</div>
<div class="a" style="left:380.6px;top:105.1px;width:99.6px;height:24.6px;background:linear-gradient(180deg,#4a4225 0,#474022 12%,#443d20 60%,#3f381d 92%,#433c20 100%);border-radius:1.5px"></div>
<div class="t" style="left:431.2px;top:118.5px;font-size:7.4px;color:#857d5b;font-style:italic">Empty Slot</div>
<div class="a" style="left:380.6px;top:133.4px;width:99.6px;height:24.6px;background:linear-gradient(180deg,#4a4225 0,#474022 12%,#443d20 60%,#3f381d 92%,#433c20 100%);border-radius:1.5px"></div>
<div class="t" style="left:431.2px;top:146.8px;font-size:7.4px;color:#857d5b;font-style:italic">Empty Slot</div>
<div class="a" style="left:380.6px;top:161.7px;width:99.6px;height:24.6px;background:linear-gradient(180deg,#4a4225 0,#474022 12%,#443d20 60%,#3f381d 92%,#433c20 100%);border-radius:1.5px"></div>
<div class="t" style="left:431.2px;top:175.1px;font-size:7.4px;color:#857d5b;font-style:italic">Empty Slot</div>
<div class="a" style="left:380.6px;top:190.0px;width:99.6px;height:24.6px;background:linear-gradient(180deg,#4a4225 0,#474022 12%,#443d20 60%,#3f381d 92%,#433c20 100%);border-radius:1.5px"></div>
<div class="t" style="left:431.2px;top:203.4px;font-size:7.4px;color:#857d5b;font-style:italic">Empty Slot</div>
<div class="a" style="left:380.6px;top:218.4px;width:99.6px;height:24.6px;background:linear-gradient(180deg,#4a4225 0,#474022 12%,#443d20 60%,#3f381d 92%,#433c20 100%);border-radius:1.5px"></div>
<div class="t" style="left:431.2px;top:231.8px;font-size:7.4px;color:#857d5b;font-style:italic">Empty Slot</div>
<div class="a" style="left:380.6px;top:246.7px;width:99.6px;height:24.6px;background:linear-gradient(180deg,#4a4225 0,#474022 12%,#443d20 60%,#3f381d 92%,#433c20 100%);border-radius:1.5px"></div>
<div class="t" style="left:431.2px;top:260.1px;font-size:7.4px;color:#857d5b;font-style:italic">Empty Slot</div>
<div class="a" style="left:380.6px;top:275.0px;width:99.6px;height:24.6px;background:linear-gradient(180deg,#4a4225 0,#474022 12%,#443d20 60%,#3f381d 92%,#433c20 100%);border-radius:1.5px"></div>
<div class="t" style="left:431.2px;top:288.4px;font-size:7.4px;color:#857d5b;font-style:italic">Empty Slot</div>
<div class="a" style="left:380.6px;top:303.4px;width:99.6px;height:24.6px;background:linear-gradient(180deg,#4a4225 0,#474022 12%,#443d20 60%,#3f381d 92%,#433c20 100%);border-radius:1.5px"></div>
<div class="t" style="left:431.2px;top:316.8px;font-size:7.4px;color:#857d5b;font-style:italic">Empty Slot</div>
<div class="a" style="left:485px;top:26px;width:6px;height:661px;background:linear-gradient(180deg,#524a2a,#423a21)"></div><div class="a" style="left:485.4px;top:26.4px;width:4.8px;height:4.6px;background:#655d36"></div>
<div class="a" style="left:759.5px;top:26px;width:5.5px;height:661px;background:#3a3830"></div>
<div class="a" style="left:761px;top:236px;width:3.2px;height:279.5px;background:#5169a1"></div>
</div>
</body></html>
